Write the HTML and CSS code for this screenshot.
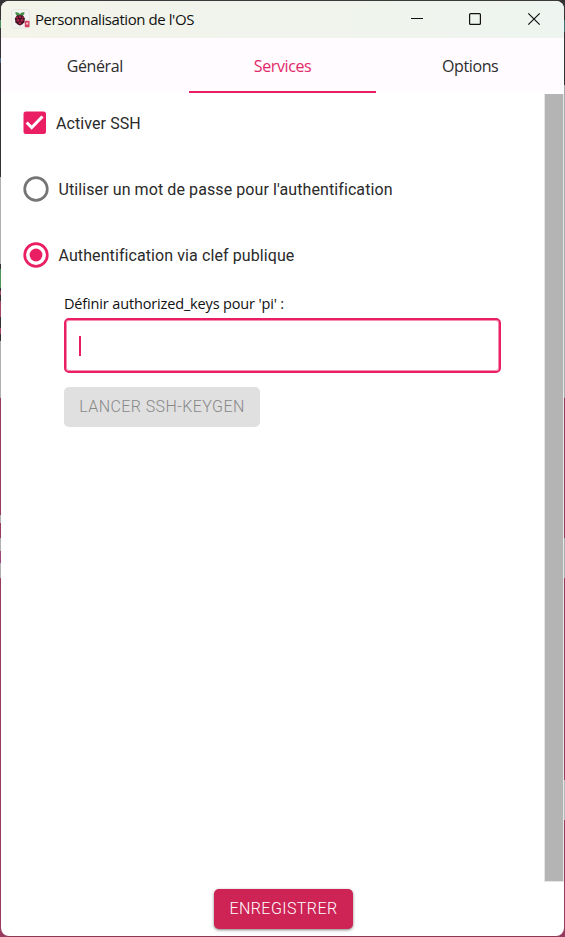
FILE: index.html
```html
<!DOCTYPE html>
<html lang="fr">
<head>
<meta charset="utf-8">
<title>Personnalisation de l'OS</title>
<link rel="stylesheet" href="styles.css">
</head>
<body>
<div class="window">
  <header class="titlebar">
    <svg class="app-icon" width="20" height="20" viewBox="0 0 20 20">
      <rect x="1.500" y=".5" width="18" height="18.500" rx="2.500" fill="#f2f2f1" stroke="#e3e5e0" stroke-width=".8"/>
      <path d="M5.200 3.500C7 2.600 9 3.400 9.900 5.100 10.800 3.400 13 2.600 14.600 3.500 14.500 5.800 13 7 9.900 7 6.800 7 5.400 5.800 5.200 3.500Z" fill="#3f8f48"/>
      <path d="M6.900 6.300h6l2 3.200-.5 3.700-2.300 2.300-2.200 1-2.300-1-2.200-2.300-.5-3.700Z" fill="#3a1224"/>
      <g fill="#a51f43"><circle cx="9.900" cy="7.700" r="1.200"/><circle cx="7.100" cy="8.600" r="1.100"/><circle cx="12.700" cy="8.600" r="1.100"/><circle cx="8" cy="11.200" r="1.500"/><circle cx="11.900" cy="11.200" r="1.500"/><circle cx="9.900" cy="14.100" r="1.400"/></g>
      <rect x="14.800" y="11.700" width="4.700" height="6.500" rx=".8" fill="#d5405f"/>
      <path d="M16.200 13.500h2v2h-2z" fill="#f6c9d1"/>
    </svg>
    <h1 class="title">Personnalisation de l'OS</h1>
    <div class="controls">
      <svg width="58" height="36" viewBox="0 0 58 36"><path d="M22 17.500h12" stroke="#111"/></svg>
      <svg width="58" height="36" viewBox="0 0 58 36"><rect x="22.600" y="12.600" width="10.800" height="10.800" rx="1" fill="none" stroke="#111" stroke-width="1.200"/></svg>
      <svg width="58" height="36" viewBox="0 0 58 36"><path d="M23.300 12.300l11.400 11.400M34.700 12.300L23.300 23.700" stroke="#111" stroke-width="1.200"/></svg>
    </div>
  </header>
  <nav class="tabs">
    <a class="tab">Général</a>
    <a class="tab active">Services</a>
    <a class="tab">Options</a>
  </nav>
  <main class="body">
    <div class="content">
      <div class="option check">
        <svg width="24" height="24" viewBox="0 0 24 24"><rect x=".5" y=".5" width="22.500" height="22.500" rx="2.500" fill="#e91e63"/><path d="M3.700 11.500l5 5L19.500 5.500" fill="none" stroke="#fff" stroke-width="3"/></svg>
        <span>Activer SSH</span>
      </div>
      <div class="option">
        <svg width="26" height="26" viewBox="0 0 26 26"><circle cx="13" cy="13" r="11.300" fill="none" stroke="#757575" stroke-width="2.700"/></svg>
        <span>Utiliser un mot de passe pour l'authentification</span>
      </div>
      <div class="option">
        <svg width="26" height="26" viewBox="0 0 26 26"><circle cx="13" cy="13" r="11.300" fill="none" stroke="#e91e63" stroke-width="2.700"/><circle cx="13" cy="13" r="6.400" fill="#e91e63"/></svg>
        <span>Authentification via clef publique</span>
      </div>
      <section class="keys">
        <div class="label">Définir authorized_keys pour 'pi' :</div>
        <div class="field"><i class="caret"></i></div>
        <button class="btn keygen" disabled>LANCER SSH-KEYGEN</button>
      </section>
    </div>
    <div class="scrollbar"></div>
  </main>
  <footer class="footer"><button class="btn save">ENREGISTRER</button></footer>
</div>
</body>
</html>
```
FILE: styles.css
```css
* { box-sizing: border-box; }
body {
  margin: 0;
  height: 937px;
  padding: 1px;
  overflow: hidden;
  background:
    linear-gradient(#333 0 20px, #4f8a61 20px 28px, #333 28px 58px, #456080 58px 63px, #333 63px 177px, #b0b0b0 177px 264px, #333 264px 269px, #4e965a 269px 288px, #333 288px 291px, #a4476b 291px 295px, #333 295px 301px, #a4476b 301px 317px, #333 317px 328px, #a4476b 328px 334px, #333 334px 341px, #b0b0b0 341px 398px, #973b60 398px 515px, #b0b0b0 515px 523px, #973b60 523px 538px, #b0b0b0 538px 551px, #9c467b 551px 563px, #b0b0b0 563px 578px, #973b60 578px) 0 0 / 8px 937px no-repeat,
    linear-gradient(#333 0 20px, #3c7775 20px 32px, #333 32px 85px, #aaa 85px 398px, #973b60 398px 538px, #aaa 538px 578px, #973b60 578px 780px, #b8b8b8 780px 820px, #973b60 820px) 557px 0 / 8px 937px no-repeat,
    linear-gradient(#3a3a3a 0 50%, #8d3556 50%);
  color: #2a2a2a;
  font-family: Roboto, sans-serif;
}
.window {
  display: flex;
  flex-direction: column;
  width: 563px;
  height: 935px;
  border-radius: 8px;
  background: #fff;
  overflow: hidden;
}
.titlebar {
  display: flex;
  align-items: center;
  height: 37px;
  padding: 0 1px 1px 9px;
  background: linear-gradient(90deg, #f3f4ea, #eef4ef);
}
.app-icon { margin-right: 5px; }
.title {
  margin: 0;
  font: 400 15px/20px "Open Sans", sans-serif;
  letter-spacing: -.43px;
  color: #111;
  white-space: nowrap;
}
.controls { display: flex; margin-left: auto; }
.tabs {
  display: flex;
  height: 55px;
  background: #fffbff;
}
.tab {
  flex: 1;
  display: flex;
  align-items: center;
  justify-content: center;
  padding-top: 3px;
  border-bottom: 2px solid transparent;
  font: 16px/22px "Open Sans", sans-serif;
  letter-spacing: -.4px;
  color: #2c2c2c;
}
.active { color: #e2296a; border-color: #e91e63; }
.body { display: flex; height: 789px; }
.content { flex: 1; padding: 17px 0 0 22px; }
.option {
  display: flex;
  align-items: center;
  gap: 9.500px;
  height: 26px;
  margin-bottom: 40.200px;
  font-size: 16px;
  letter-spacing: .09px;
  white-space: nowrap;
}
.check { gap: 9px; }
.keys { margin: -16px 0 0 41px; }
.label {
  height: 25px;
  font: 14.500px/21px "Open Sans", sans-serif;
  letter-spacing: -.15px;
  color: #111;
}
.field {
  width: 437px;
  height: 55px;
  padding: 16px 13px;
  border: 2px solid #e91e63;
  border-radius: 5px;
  box-shadow: inset 0 0 0 1px #f48fb1;
}
.caret { display: block; width: 2px; height: 20px; background: #e91e63; }
.btn {
  display: block;
  height: 40px;
  padding: 0;
  border: 0;
  border-radius: 5px;
  font: 300 16px/40px Roboto, sans-serif;
  letter-spacing: .42px;
  white-space: nowrap;
}
.keygen { width: 196px; margin-top: 14px; background: #e0e0e0; color: #888; }
.scrollbar { width: 20px; margin-top: 1px; border: solid #e6e6e6; border-width: 0 1px 1px; background: #b4b4b4; }
.footer { display: flex; justify-content: center; padding: 7px 0 0 2px; }
.save { width: 139px; background: #cd2355; color: #fff; box-shadow: 0 1px 3px rgba(0,0,0,.5); }
```
